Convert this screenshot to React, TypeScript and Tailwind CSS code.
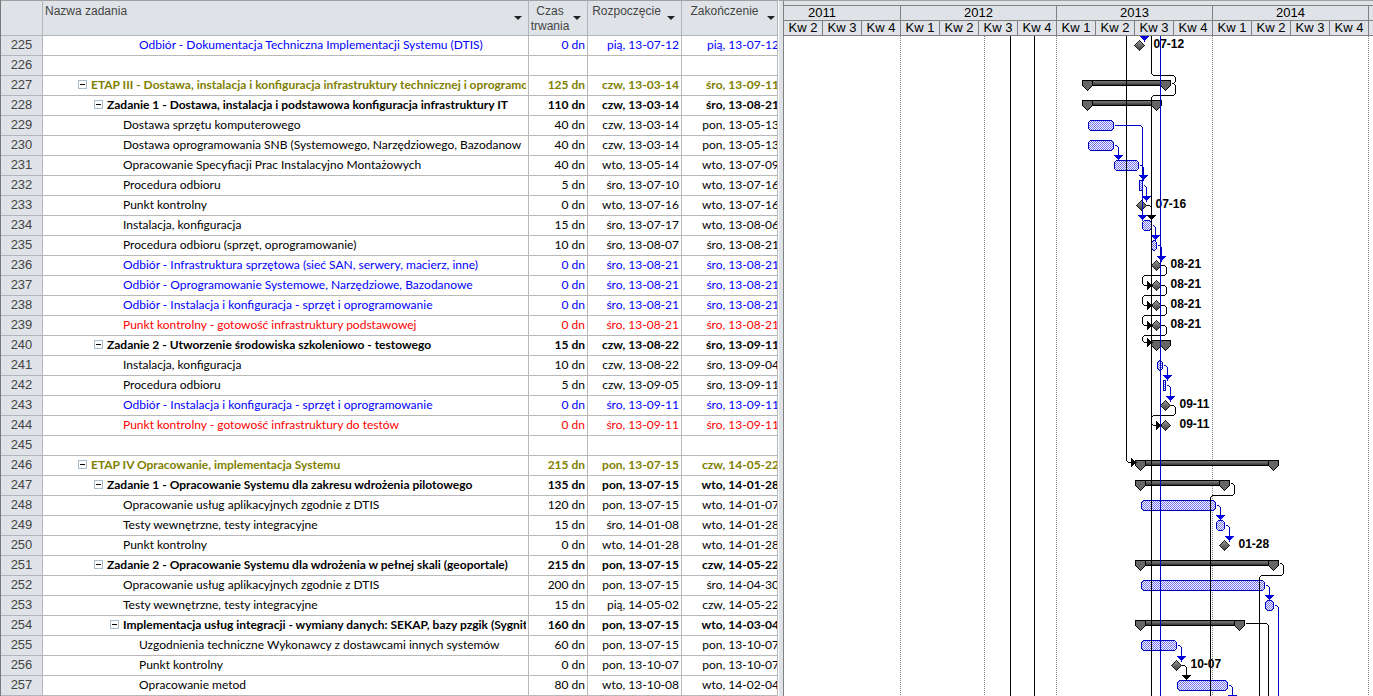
import React from 'react';
import clsx from 'clsx';

type Tone = 'plain' | 'stage' | 'summary' | 'accept' | 'check';

type Task = {
  id: number;
  level: number;
  name: string;
  duration: string;
  start: string;
  finish: string;
  tone: Tone;
};

const task = (
  id: number,
  level: number,
  tone: Tone,
  name: string,
  duration: string,
  start: string,
  finish: string
): Task => ({ id, level, tone, name, duration, start, finish });

const tasks: Task[] = [
  task(225, 4, 'accept', 'Odbiór - Dokumentacja Techniczna Implementacji Systemu (DTIS)', '0 dn', 'pią, 13-07-12', 'pią, 13-07-12'),
  task(226, 0, 'plain', '', '', '', ''),
  task(227, 1, 'stage', 'ETAP III - Dostawa, instalacja i konfiguracja infrastruktury technicznej i oprogramo', '125 dn', 'czw, 13-03-14', 'śro, 13-09-11'),
  task(228, 2, 'summary', 'Zadanie 1 - Dostawa, instalacja i podstawowa konfiguracja infrastruktury IT', '110 dn', 'czw, 13-03-14', 'śro, 13-08-21'),
  task(229, 3, 'plain', 'Dostawa sprzętu komputerowego', '40 dn', 'czw, 13-03-14', 'pon, 13-05-13'),
  task(230, 3, 'plain', 'Dostawa oprogramowania SNB (Systemowego, Narzędziowego, Bazodanow', '40 dn', 'czw, 13-03-14', 'pon, 13-05-13'),
  task(231, 3, 'plain', 'Opracowanie Specyfiacji Prac Instalacyjno Montażowych', '40 dn', 'wto, 13-05-14', 'wto, 13-07-09'),
  task(232, 3, 'plain', 'Procedura odbioru', '5 dn', 'śro, 13-07-10', 'wto, 13-07-16'),
  task(233, 3, 'plain', 'Punkt kontrolny', '0 dn', 'wto, 13-07-16', 'wto, 13-07-16'),
  task(234, 3, 'plain', 'Instalacja, konfiguracja', '15 dn', 'śro, 13-07-17', 'wto, 13-08-06'),
  task(235, 3, 'plain', 'Procedura odbioru (sprzęt, oprogramowanie)', '10 dn', 'śro, 13-08-07', 'śro, 13-08-21'),
  task(236, 3, 'accept', 'Odbiór - Infrastruktura sprzętowa (sieć SAN, serwery, macierz, inne)', '0 dn', 'śro, 13-08-21', 'śro, 13-08-21'),
  task(237, 3, 'accept', 'Odbiór - Oprogramowanie Systemowe, Narzędziowe, Bazodanowe', '0 dn', 'śro, 13-08-21', 'śro, 13-08-21'),
  task(238, 3, 'accept', 'Odbiór - Instalacja i konfiguracja - sprzęt i oprogramowanie', '0 dn', 'śro, 13-08-21', 'śro, 13-08-21'),
  task(239, 3, 'check', 'Punkt kontrolny - gotowość infrastruktury podstawowej', '0 dn', 'śro, 13-08-21', 'śro, 13-08-21'),
  task(240, 2, 'summary', 'Zadanie 2 - Utworzenie środowiska szkoleniowo - testowego', '15 dn', 'czw, 13-08-22', 'śro, 13-09-11'),
  task(241, 3, 'plain', 'Instalacja, konfiguracja', '10 dn', 'czw, 13-08-22', 'śro, 13-09-04'),
  task(242, 3, 'plain', 'Procedura odbioru', '5 dn', 'czw, 13-09-05', 'śro, 13-09-11'),
  task(243, 3, 'accept', 'Odbiór - Instalacja i konfiguracja - sprzęt i oprogramowanie', '0 dn', 'śro, 13-09-11', 'śro, 13-09-11'),
  task(244, 3, 'check', 'Punkt kontrolny - gotowość infrastruktury do testów', '0 dn', 'śro, 13-09-11', 'śro, 13-09-11'),
  task(245, 0, 'plain', '', '', '', ''),
  task(246, 1, 'stage', 'ETAP IV Opracowanie, implementacja Systemu', '215 dn', 'pon, 13-07-15', 'czw, 14-05-22'),
  task(247, 2, 'summary', 'Zadanie 1 - Opracowanie Systemu dla zakresu wdrożenia pilotowego', '135 dn', 'pon, 13-07-15', 'wto, 14-01-28'),
  task(248, 3, 'plain', 'Opracowanie usług aplikacyjnych zgodnie z DTIS', '120 dn', 'pon, 13-07-15', 'wto, 14-01-07'),
  task(249, 3, 'plain', 'Testy wewnętrzne, testy integracyjne', '15 dn', 'śro, 14-01-08', 'wto, 14-01-28'),
  task(250, 3, 'plain', 'Punkt kontrolny', '0 dn', 'wto, 14-01-28', 'wto, 14-01-28'),
  task(251, 2, 'summary', 'Zadanie 2 - Opracowanie Systemu dla wdrożenia w pełnej skali (geoportale)', '215 dn', 'pon, 13-07-15', 'czw, 14-05-22'),
  task(252, 3, 'plain', 'Opracowanie usług aplikacyjnych zgodnie z DTIS', '200 dn', 'pon, 13-07-15', 'śro, 14-04-30'),
  task(253, 3, 'plain', 'Testy wewnętrzne, testy integracyjne', '15 dn', 'pią, 14-05-02', 'czw, 14-05-22'),
  task(254, 3, 'summary', 'Implementacja usług integracji - wymiany danych: SEKAP, bazy pzgik (Sygnit', '160 dn', 'pon, 13-07-15', 'wto, 14-03-04'),
  task(255, 4, 'plain', 'Uzgodnienia techniczne Wykonawcy z dostawcami innych systemów', '60 dn', 'pon, 13-07-15', 'pon, 13-10-07'),
  task(256, 4, 'plain', 'Punkt kontrolny', '0 dn', 'pon, 13-10-07', 'pon, 13-10-07'),
  task(257, 4, 'plain', 'Opracowanie metod', '80 dn', 'wto, 13-10-08', 'wto, 14-02-04'),
];

const toneClass: Record<Tone, string> = {
  plain: 'text-black',
  stage: 'font-bold text-[#808000]',
  summary: 'font-bold text-black',
  accept: 'text-[#0000ff]',
  check: 'text-[#ff0000]',
};

const indentClass = ['pl-8', 'pl-12', 'pl-16', 'pl-20', 'pl-24'];

const columns = [
  { label: 'Nazwa zadania', align: 'text-left pl-0.5', arrow: 'right-1.5' },
  { label: 'Czas trwania', align: 'text-center pr-4', arrow: 'right-1.5' },
  { label: 'Rozpoczęcie', align: 'text-center pr-4', arrow: 'right-1.5' },
  { label: 'Zakończenie', align: 'text-center pr-2.5', arrow: 'right-0.5' },
];

function FilterButton({ label, className }: { label: string; className: string }) {
  return (
    <button type="button" aria-label={`Filtr: ${label}`} className={clsx('absolute top-[15px] h-1 w-2', className)}>
      <svg width="8" height="4" className="block fill-[#222]">
        <path d="M0 0h8L4 4z" />
      </svg>
    </button>
  );
}

function OutlineToggle() {
  return (
    <button
      type="button"
      aria-label="Zwiń"
      className="-ml-[13px] mr-1 flex size-[9px] shrink-0 items-center justify-center border border-[#a9bccb] bg-white"
    >
      <span className="h-px w-[5px] bg-black" />
    </button>
  );
}

function TaskTable() {
  return (
    <table className="w-[778px] shrink-0 table-fixed border-separate border-spacing-0 border-l border-[#77777c] text-black">
      <colgroup>
        <col className="w-[42px]" />
        <col />
        <col className="w-[59px]" />
        <col className="w-[94px]" />
        <col className="w-[96px]" />
      </colgroup>
      <thead className="font-['Liberation_Sans',sans-serif] text-xs text-[#444]">
        <tr className="h-9 bg-[#dfe3e8]">
          <th className="border-b border-r border-t border-[#b1b5ba] border-t-[#a0a0a0] p-0" />
          {columns.map(({ label, align, arrow }) => (
            <th
              key={label}
              className="relative border-b border-r border-t border-[#b1b5ba] border-t-[#a0a0a0] p-0 align-top font-normal"
            >
              <div className={clsx('h-[34px] overflow-hidden pt-[3px] leading-[15px]', align)}>{label}</div>
              <FilterButton label={label} className={arrow} />
            </th>
          ))}
        </tr>
      </thead>
      <tbody className="font-[Lato,sans-serif] text-xs leading-[17px]">
        {tasks.map((t) => (
          <tr key={t.id} className={clsx('h-5 align-top', toneClass[t.tone])}>
            <th className="border-b border-r border-[#b1b5ba] bg-[#dfe3e8] p-0 text-center font-['Liberation_Sans',sans-serif] text-[13px] font-normal text-[#444]">
              {t.id}
            </th>
            <td className="border-b border-r border-[#b9b9b9] py-0 pl-0 pr-0.5">
              <div className={clsx('flex items-center overflow-hidden whitespace-nowrap', indentClass[t.level])}>
                {t.level > 0 && (t.tone === 'stage' || t.tone === 'summary') && <OutlineToggle />}
                <span>{t.name}</span>
              </div>
            </td>
            <td className="border-b border-r border-[#b9b9b9] py-0 pl-0 pr-0.5 text-right">{t.duration}</td>
            <td className="border-b border-r border-[#b9b9b9] py-0 pl-0 pr-0.5 text-right">{t.start}</td>
            <td className="border-b border-r border-[#b9b9b9] p-0">
              <div className="flex justify-end overflow-hidden whitespace-nowrap">
                <span className="-mr-0.5">{t.finish}</span>
              </div>
            </td>
          </tr>
        ))}
      </tbody>
    </table>
  );
}

const years = [
  { year: '2011', quarters: ['Kw 2', 'Kw 3', 'Kw 4'] },
  { year: '2012', quarters: ['Kw 1', 'Kw 2', 'Kw 3', 'Kw 4'] },
  { year: '2013', quarters: ['Kw 1', 'Kw 2', 'Kw 3', 'Kw 4'] },
  { year: '2014', quarters: ['Kw 1', 'Kw 2', 'Kw 3', 'Kw 4'] },
  { year: '', quarters: [''] },
];

function Timescale() {
  return (
    <div className="flex h-9 overflow-hidden border-b border-t border-[#808080] border-t-[#a0a0a0] bg-[#dfe3e8] pt-1 font-['Liberation_Sans',sans-serif] text-[13px] leading-[14px] text-black">
      {years.map(({ year, quarters }) => (
        <div key={year} className="shrink-0 border-t border-[#808080]">
          <div
            className={clsx(
              'h-[15px] border-b border-r border-[#808080] text-center',
              quarters.length === 3 && 'pr-10'
            )}
          >
            {year}
          </div>
          <div className="flex">
            {quarters.map((q) => (
              <div key={q} className="h-[15px] w-[39px] border-r border-[#808080] text-center">
                {q}
              </div>
            ))}
          </div>
        </div>
      ))}
    </div>
  );
}

// Chart coordinates: x and y count from the corner of the sheet.
const CHART_X = 784;
const CHART_Y = 36;
const rowTop = (id: number) => CHART_Y + (id - 225) * 20;

const bars = [
  { id: 229, x1: 1088, x2: 1113 },
  { id: 230, x1: 1088, x2: 1113 },
  { id: 231, x1: 1114, x2: 1138 },
  { id: 232, x1: 1139, x2: 1142 },
  { id: 234, x1: 1142, x2: 1151 },
  { id: 235, x1: 1151, x2: 1156 },
  { id: 241, x1: 1157, x2: 1162 },
  { id: 242, x1: 1163, x2: 1165 },
  { id: 248, x1: 1141, x2: 1215 },
  { id: 249, x1: 1216, x2: 1224 },
  { id: 252, x1: 1141, x2: 1264 },
  { id: 253, x1: 1265, x2: 1273 },
  { id: 255, x1: 1141, x2: 1176 },
  { id: 257, x1: 1177, x2: 1227 },
];

const summaries = [
  { id: 227, x1: 1082, x2: 1170 },
  { id: 228, x1: 1082, x2: 1161 },
  { id: 240, x1: 1151, x2: 1170 },
  { id: 246, x1: 1135, x2: 1278 },
  { id: 247, x1: 1135, x2: 1229 },
  { id: 251, x1: 1135, x2: 1278 },
  { id: 254, x1: 1135, x2: 1244 },
];

const milestones = [
  { id: 225, x: 1139, label: '07-12' },
  { id: 233, x: 1141, label: '07-16' },
  { id: 236, x: 1156, label: '08-21' },
  { id: 237, x: 1156, label: '08-21' },
  { id: 238, x: 1156, label: '08-21' },
  { id: 239, x: 1156, label: '08-21' },
  { id: 243, x: 1165, label: '09-11' },
  { id: 244, x: 1165, label: '09-11' },
  { id: 250, x: 1224, label: '01-28' },
  { id: 256, x: 1176, label: '10-07' },
];

type Point = [number, number];
type Link = { points: Point[]; arrow?: 'down' | 'right'; blue?: boolean };

const BOTTOM = 700;

const links: Link[] = [
  { points: [[1010, 30], [1010, BOTTOM]] },
  { points: [[1034, 30], [1034, BOTTOM]] },
  { points: [[1144, 30], [1144, 41]], arrow: 'down', blue: true },
  { points: [[1126, 30], [1126, 462], [1136, 462]], arrow: 'right' },
  { points: [[1151, 30], [1151, 75], [1175, 75], [1175, 83], [1171, 83]] },
  { points: [[1171, 83], [1175, 83], [1175, 95], [1151, 95], [1151, BOTTOM]] },
  { points: [[1114, 125], [1142, 125], [1142, 220]], arrow: 'down', blue: true },
  { points: [[1114, 145], [1118, 145], [1118, 160]], arrow: 'down', blue: true },
  { points: [[1139, 165], [1143, 165], [1143, 180]], arrow: 'down', blue: true },
  { points: [[1143, 185], [1146, 185], [1146, 201]], arrow: 'down', blue: true },
  { points: [[1146, 205], [1151, 205], [1151, 220]], arrow: 'down' },
  { points: [[1152, 225], [1155, 225], [1155, 240]], arrow: 'down', blue: true },
  { points: [[1157, 245], [1161, 245], [1161, 261]], arrow: 'down', blue: true },
  { points: [[1161, 265], [1166, 265], [1166, 275], [1142, 275], [1142, 285], [1152, 285]], arrow: 'right' },
  { points: [[1161, 285], [1166, 285], [1166, 295], [1142, 295], [1142, 305], [1152, 305]], arrow: 'right' },
  { points: [[1161, 305], [1166, 305], [1166, 315], [1142, 315], [1142, 325], [1152, 325]], arrow: 'right' },
  { points: [[1161, 325], [1166, 325], [1166, 335], [1142, 335], [1142, 342], [1152, 342]], arrow: 'right' },
  { points: [[1163, 365], [1167, 365], [1167, 380]], arrow: 'down', blue: true },
  { points: [[1166, 385], [1170, 385], [1170, 401]], arrow: 'down', blue: true },
  { points: [[1170, 405], [1175, 405], [1175, 415], [1151, 415], [1151, 425], [1161, 425]], arrow: 'right' },
  { points: [[1230, 483], [1234, 483], [1234, 495], [1210, 495], [1210, BOTTOM]] },
  { points: [[1216, 505], [1220, 505], [1220, 520]], arrow: 'down', blue: true },
  { points: [[1225, 525], [1229, 525], [1229, 541]], arrow: 'down', blue: true },
  { points: [[1279, 563], [1283, 563], [1283, 575], [1259, 575], [1259, BOTTOM]] },
  { points: [[1265, 585], [1269, 585], [1269, 600]], arrow: 'down', blue: true },
  { points: [[1274, 605], [1278, 605], [1278, BOTTOM]], blue: true },
  { points: [[1245, 623], [1268, 623], [1268, BOTTOM]] },
  { points: [[1177, 645], [1181, 645], [1181, 661]], arrow: 'down', blue: true },
  { points: [[1181, 665], [1186, 665], [1186, 680]], arrow: 'down' },
  { points: [[1228, 685], [1232, 685], [1232, 700]], arrow: 'down', blue: true },
  { points: [[1160, 30], [1160, BOTTOM]], blue: true },
];

// Right-angled route with its corners cut off.
function routePath(points: Point[]) {
  return points
    .map(([x, y], i) => {
      if (i === 0) return `M${x} ${y}`;
      const next = points[i + 1];
      if (!next) return `L${x} ${y}`;
      const [px, py] = points[i - 1];
      const fromX = x - Math.sign(x - px) * 2;
      const fromY = y - Math.sign(y - py) * 2;
      const toX = x + Math.sign(next[0] - x) * 2;
      const toY = y + Math.sign(next[1] - y) * 2;
      return `L${fromX} ${fromY}L${toX} ${toY}`;
    })
    .join('');
}

function LinkLine({ points, arrow, blue }: Link) {
  const [x, y] = points[points.length - 1];
  const color = blue ? '#0000e0' : '#000';
  return (
    <g>
      <path d={routePath(points)} fill="none" stroke={blue ? '#0000c0' : '#000'} />
      {arrow === 'down' && <path d={`M${x - 4} ${y - 5}h8l-4 4z`} fill={color} stroke={color} />}
      {arrow === 'right' && <path d={`M${x - 5} ${y - 4}v8l4 -4z`} fill={color} stroke={color} />}
    </g>
  );
}

function SummaryBar({ id, x1, x2 }: { id: number; x1: number; x2: number }) {
  const y = rowTop(id) + 4;
  const cap = (x: number) => `M${x} ${y}h10v5l-5 5l-5 -5z`;
  return (
    <g stroke="#000">
      <rect x={x1} y={y} width={x2 - x1} height={5} fill="url(#summary)" />
      <path d={cap(x1)} fill="#666" />
      <path d={cap(x2 - 10)} fill="#666" />
    </g>
  );
}

function TaskBar({ id, x1, x2 }: { id: number; x1: number; x2: number }) {
  const y = rowTop(id) + 4;
  const c = x2 - x1 > 4 ? 2 : 0;
  return (
    <path
      d={`M${x1 + c} ${y}H${x2 - c}l${c} ${c}v${10 - 2 * c}l${-c} ${c}H${x1 + c}l${-c} ${-c}v${2 * c - 10}z`}
      fill="url(#hatch)"
      stroke="#0000c0"
    />
  );
}

function GanttChart() {
  return (
    <svg className="block h-[660px] w-full bg-white" shapeRendering="crispEdges">
      <defs>
        <pattern id="hatch" width="2" height="2" patternUnits="userSpaceOnUse" x="0.5" y="0.5">
          <rect width="2" height="2" fill="#fff" />
          <rect width="1" height="1" fill="#7070f0" />
          <rect x="1" y="1" width="1" height="1" fill="#7070f0" />
        </pattern>
        <linearGradient id="summary" x1="0" y1="0" x2="0" y2="1">
          <stop offset="0.3" stopColor="#707070" />
          <stop offset="0.9" stopColor="#333" />
        </linearGradient>
        <linearGradient id="milestone" x1="0" y1="0" x2="0" y2="1">
          <stop offset="0.2" stopColor="#888" />
          <stop offset="0.9" stopColor="#444" />
        </linearGradient>
      </defs>
      <g transform={`translate(${0.5 - CHART_X} ${0.5 - CHART_Y})`}>
        {[900, 984, 1056, 1212, 1368].map((x) => (
          <path key={x} d={`M${x} 35.5V${BOTTOM}`} stroke="#808080" strokeDasharray="1 1" />
        ))}
        {summaries.map((s) => (
          <SummaryBar key={s.id} {...s} />
        ))}
        {bars.map((b) => (
          <TaskBar key={b.id} {...b} />
        ))}
        {milestones.map(({ id, x, label }) => (
          <g key={id}>
            <path
              d={`M${x} ${rowTop(id) + 4}l5 5l-5 5l-5 -5z`}
              fill="url(#milestone)"
              stroke="#222"
            />
            <text
              x={x + 14}
              y={rowTop(id) + 11}
              className="font-['Liberation_Sans',sans-serif] text-xs font-bold"
            >
              {label}
            </text>
          </g>
        ))}
        {links.map((link, i) => (
          <LinkLine key={i} {...link} />
        ))}
      </g>
    </svg>
  );
}

function App() {
  return (
    <div className="flex min-h-screen overflow-hidden bg-white">
      <TaskTable />
      <div className="w-1.5 shrink-0 border-l border-r border-t border-[#808080] border-l-white border-t-[#a0a0a0] bg-[#dfe3e8]" />
      <main className="min-w-0 flex-1 overflow-hidden">
        <Timescale />
        <GanttChart />
      </main>
    </div>
  );
}

export default App;
